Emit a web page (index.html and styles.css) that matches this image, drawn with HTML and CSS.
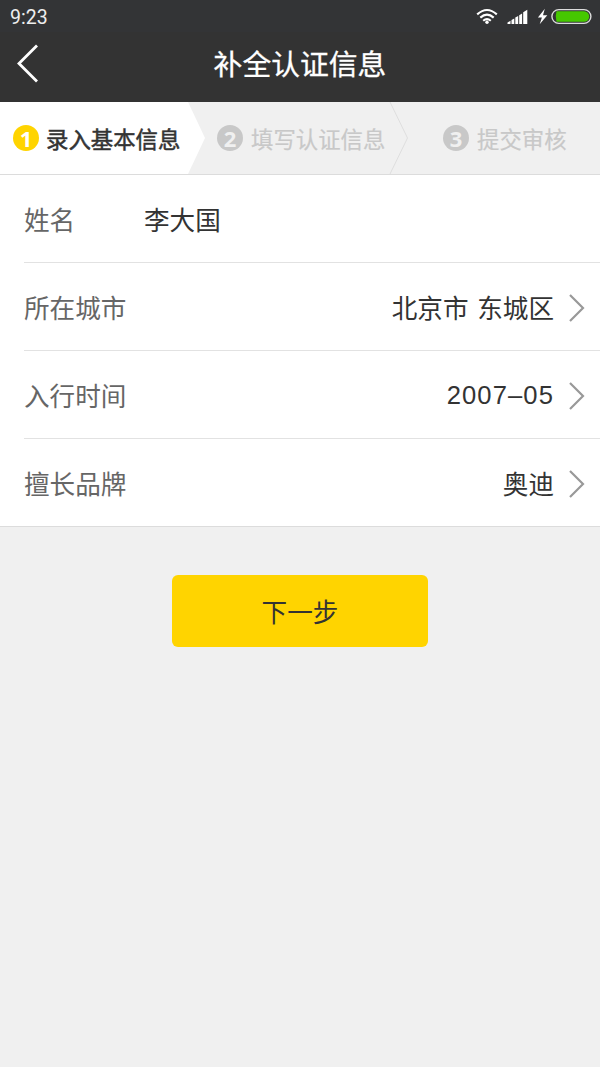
FILE: index.html
```html
<!DOCTYPE html>
<html lang="zh-CN">
<head>
    <meta charset="UTF-8">
    <title>补全认证信息</title>
    <link rel="stylesheet" href="styles.css">
</head>
<body>
    <div class="statusbar">
        <span class="time">9:23</span>
        <svg class="status-icons" width="118" height="20" viewBox="0 0 118 20">
            <!-- wifi -->
            <g fill="none" stroke="#fff" stroke-width="2.1">
                <path d="M1.2 7.4Q11 -1.4 20.8 7.4"/>
                <path d="M4.3 10.6Q11 4.6 17.7 10.6"/>
                <path d="M7.2 13.7Q11 10.4 14.8 13.7"/>
            </g>
            <circle cx="11" cy="15.2" r="1.7" fill="#fff"/>
            <!-- signal -->
            <path fill="#fff" d="M31.5 17v-1.5l3-1.8V17zM35.5 17v-4l2.8-1.6V17zM39.3 17v-6.4l2.9-1.7V17zM43.2 17V8.2l2.9-1.7V17zM47.2 17V5.2l4.1-2.5V17z"/>
            <!-- charging -->
            <path fill="#fff" d="M68.8 1.8l-6.9 8.7h4l-2.2 6.7 7.6-9h-4.3z"/>
            <rect x="75.9" y="2.6" width="39" height="13.8" rx="6.9" fill="none" stroke="#ddd" stroke-width="1.4"/>
            <path fill="#46c800" d="M80.5 4.3h27.5a5.2 5.2 0 0 1 0 10.4H80.5q-1.6-5.2 0-10.4z"/>
        </svg>
    </div>

    <div class="navbar">
        <svg class="back" width="24" height="40" viewBox="0 0 24 40">
            <path d="M22 1.5L4 19.5l18 18" fill="none" stroke="#fff" stroke-width="2.8"/>
        </svg>
        <h1>补全认证信息</h1>
    </div>

    <div class="steps">
        <div class="step step-1 active">
            <span class="num">1</span>
            <span class="text">录入基本信息</span>
        </div>
        <div class="step step-2">
            <span class="num">2</span>
            <span class="text">填写认证信息</span>
            <svg class="divider" width="20" height="72" viewBox="0 0 20 72">
                <path d="M1 0l17.5 36L1 72" fill="none" stroke="#dedede"/>
            </svg>
        </div>
        <div class="step step-3">
            <span class="num">3</span>
            <span class="text">提交审核</span>
        </div>
    </div>

    <div class="form">
        <div class="row">
            <span class="label">姓名</span>
            <span class="value name">李大国</span>
        </div>
        <div class="row">
            <span class="label">所在城市</span>
            <span class="value">北京市 东城区</span>
            <svg class="arrow" width="16" height="28" viewBox="0 0 16 28">
                <path d="M1 1l13 13L1 27" fill="none" stroke="#999" stroke-width="2.2"/>
            </svg>
        </div>
        <div class="row">
            <span class="label">入行时间</span>
            <span class="value date">2007–05</span>
            <svg class="arrow" width="16" height="28" viewBox="0 0 16 28">
                <path d="M1 1l13 13L1 27" fill="none" stroke="#999" stroke-width="2.2"/>
            </svg>
        </div>
        <div class="row">
            <span class="label">擅长品牌</span>
            <span class="value">奥迪</span>
            <svg class="arrow" width="16" height="28" viewBox="0 0 16 28">
                <path d="M1 1l13 13L1 27" fill="none" stroke="#999" stroke-width="2.2"/>
            </svg>
        </div>
    </div>

    <button class="next">下一步</button>
</body>
</html>
```
FILE: styles.css
```css
* {
    box-sizing: border-box;
}
body {
    margin: 0;
    min-height: 100vh;
    background: #f0f0f0;
    color: #333;
    font-family: "Noto Sans CJK SC", sans-serif;
}
.statusbar {
    display: flex;
    justify-content: space-between;
    height: 32px;
    padding: 7px 6px 0 10px;
    background: #333436;
}
.time {
    color: #eee;
    font: 19.5px/21px Roboto, sans-serif;
}
.navbar {
    display: flex;
    align-items: center;
    height: 70px;
    padding: 0 15px 6px;
    background: #333;
}
.navbar h1 {
    flex: 1;
    margin: 0 24px 2px 0;
    color: #fff;
    font-size: 28.8px;
    font-weight: 400;
    line-height: 40px;
    text-align: center;
    -webkit-text-stroke: 0.3px #fff;
}
.steps {
    display: flex;
    height: 73px;
    border-bottom: 1px solid #dcdcdc;
}
.step {
    display: flex;
    align-items: center;
    color: #c8c8c8;
    font-size: 22.4px;
    line-height: 32px;
    white-space: nowrap;
}
.step-1 {
    width: 205px;
    padding-left: 13px;
    background: #fff;
    clip-path: polygon(0 0, 188px 0, 205px 50%, 188px 100%, 0 100%);
}
.step-2 {
    width: 204px;
    padding-left: 12px;
}
.step-3 {
    padding-left: 34px;
}
.step .text {
    margin-left: 8px;
    padding-bottom: 1px;
    -webkit-text-stroke: 0.2px;
}
.step-1 .text {
    margin-left: 7px;
}
.divider {
    flex-shrink: 0;
    margin-left: auto;
}
.num {
    flex-shrink: 0;
    width: 26px;
    height: 26px;
    border-radius: 50%;
    background: #c8c8c8;
    color: #f0f0f0;
    font: bold 22px/26px "Noto Sans", sans-serif;
    text-align: center;
}
.active .text {
    color: #333;
    -webkit-text-stroke: 0.5px;
}
.active .num {
    background: #ffd400;
    color: #fff;
}
.form {
    background: #fff;
    border-bottom: 1px solid #dcdcdc;
}
.row {
    display: flex;
    align-items: center;
    height: 88px;
    margin-left: 24px;
    padding-right: 15px;
    border-bottom: 1px solid #e2e2e2;
    font-size: 25.6px;
}
.row:last-child {
    height: 87px;
    border-bottom: none;
}
.label {
    width: 120px;
    padding-bottom: 1px;
    color: #666;
}
.value {
    flex: 1;
    padding-bottom: 1px;
    text-align: right;
    word-spacing: 3px;
}
.name {
    text-align: left;
}
.date {
    padding: 2px 0 0;
    font-family: "Liberation Sans", sans-serif;
    letter-spacing: 1.1px;
}
.arrow {
    margin: 2px 0 0 15px;
}
.next {
    display: block;
    width: 256px;
    height: 72px;
    margin: 48px auto 0;
    padding: 0 0 2px;
    border: none;
    border-radius: 6px;
    background: #ffd400;
    color: #333;
    font-family: inherit;
    font-size: 25.6px;
}
```
